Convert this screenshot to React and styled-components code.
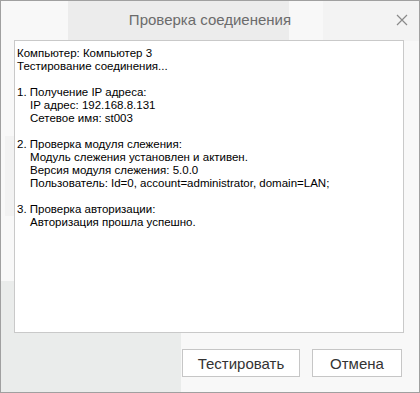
import React from "react";
import styled, { createGlobalStyle } from "styled-components";

const Global = createGlobalStyle`
  html, body { margin: 0; padding: 0; background: #f8f8f8; }
  #root { width: 420px; height: 393px; }
`;

const Dialog = styled.div`
  box-sizing: border-box;
  width: 420px;
  height: 393px;
  border: 1px solid #a0a0a0;
  display: flex;
  flex-direction: column;
  background:
    linear-gradient(#ececec, #ececec) 67px 0 / 221px 40px no-repeat,
    linear-gradient(#f3f3f3, #f3f3f3) 322px 0 / 98px 40px no-repeat,
    linear-gradient(#eaeceb, #eaeceb) 0 280px / 180px 113px no-repeat,
    linear-gradient(#f2f2f2, #f2f2f2) 4px 135px / 12px 80px no-repeat,
    #f8f8f8;
`;

const TitleBar = styled.div`
  height: 39px;
  display: flex;
  align-items: center;
  justify-content: center;
  position: relative;
`;

const Title = styled.div`
  font-family: "Liberation Sans", Arial, sans-serif;
  font-size: 15px;
  color: #6b6b6b;
  margin-top: -2px;
`;

const Close = styled.button`
  position: absolute;
  right: 10px;
  top: 12px;
  width: 14px;
  height: 14px;
  padding: 0;
  border: none;
  background: none;
  display: flex;
`;

const Log = styled.div`
  box-sizing: border-box;
  margin: 0 15px 0 13px;
  height: 293px;
  background: #ffffff;
  border: 1px solid #c9c9c9;
  padding: 6px 2px 0 2px;
  font-family: "Liberation Sans", Tahoma, sans-serif;
  font-size: 11.5px;
  line-height: 13px;
  color: #000;
`;

const Line = styled.div`
  padding-left: ${(p) => (p.$indent ? 13 : 0)}px;
  height: 13px;
  white-space: pre;
`;

const Footer = styled.div`
  display: flex;
  justify-content: flex-end;
  gap: 12px;
  padding: 16px 17px 0 0;
`;

const Button = styled.button`
  box-sizing: border-box;
  width: ${(p) => p.$w}px;
  height: 28px;
  background: #ffffff;
  border: 1px solid #c6c6c6;
  font-family: "Liberation Sans", Arial, sans-serif;
  font-size: 15px;
  color: #333;
  padding: 0;
`;

const lines = [
  ["Компьютер: Компьютер 3"],
  ["Тестирование соединения..."],
  [""],
  ["1. Получение IP адреса:"],
  ["IP адрес: 192.168.8.131", 1],
  ["Сетевое имя: st003", 1],
  [""],
  ["2. Проверка модуля слежения:"],
  ["Модуль слежения установлен и активен.", 1],
  ["Версия модуля слежения: 5.0.0", 1],
  ["Пользователь: Id=0, account=administrator, domain=LAN;", 1],
  [""],
  ["3. Проверка авторизации:"],
  ["Авторизация прошла успешно.", 1],
];

export default function App() {
  return (
    <>
      <Global />
      <Dialog>
        <TitleBar>
          <Title>Проверка соедиенения</Title>
          <Close aria-label="Закрыть">
            <svg width="14" height="14" viewBox="0 0 14 14">
              <path d="M2 2L12 12M12 2L2 12" stroke="#8a8a8a" strokeWidth="1.2" fill="none" />
            </svg>
          </Close>
        </TitleBar>
        <Log>
          {lines.map(([t, ind], i) => (
            <Line key={i} $indent={ind}>{t}</Line>
          ))}
        </Log>
        <Footer>
          <Button $w={118}>Тестировать</Button>
          <Button $w={90}>Отмена</Button>
        </Footer>
      </Dialog>
    </>
  );
}
